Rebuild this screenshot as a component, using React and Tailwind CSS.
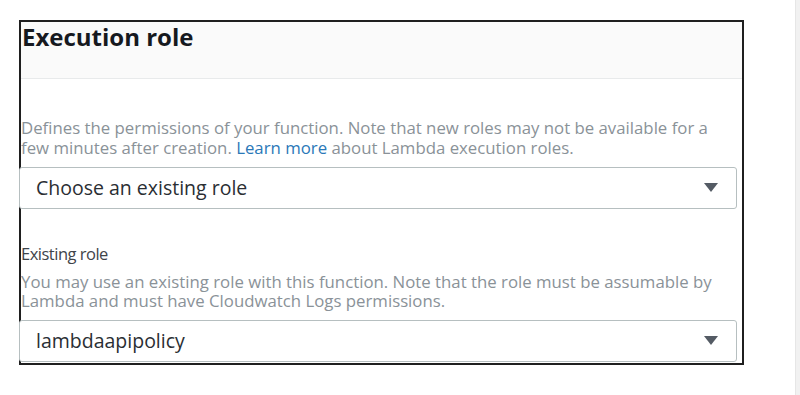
import React from "react";

const Caret = () => (
  <svg width="14" height="10" viewBox="0 0 14 10" className="shrink-0">
    <path d="M0 0 L14 0 L7 9 Z" fill="#545b64" />
  </svg>
);

const Select = ({ value }) => (
  <div className="flex items-center justify-between h-[42px] mr-[5px] -ml-[2px] pl-[16px] pr-[18px] bg-white border border-[#b6bfc0] rounded-[3px]">
    <span className="text-[19.5px] text-[#2a2e33]">{value}</span>
    <Caret />
  </div>
);

export default function App() {
  return (
    <div
      className="flex w-[800px] h-[395px] bg-white overflow-hidden"
      style={{ fontFamily: '"Open Sans", "Noto Sans", sans-serif' }}
    >
      <div className="flex-1 pl-[19px] pt-[20px]">
        <div className="w-[725px] h-[345px] border-2 border-[#1f1f1f]">
          {/* HEADER */}
          <div className="h-[57px] bg-[#fafafa] border-b border-[#e8eaeb] pl-[1px] pt-[1px]">
            <h2 className="text-[24px] leading-[28px] font-bold text-[#16191f]">
              Execution role
            </h2>
          </div>

          {/* BODY */}
          <div className="pt-[39px]">
            <p className="text-[16.8px] leading-[20px] text-[#8a9298] pr-[6px]">
              Defines the permissions of your function. Note that new roles may
              not be available for a few minutes after creation.{" "}
              <span className="text-[#2a78b8]">Learn more</span> about Lambda
              execution roles.
            </p>
            <div className="mt-[9px]">
              <Select value="Choose an existing role" />
            </div>

            <div className="mt-[34px] text-[16.5px] leading-[22px] tracking-[-0.5px] text-[#3f444a]">
              Existing role
            </div>
            <p className="mt-[7px] text-[16.8px] leading-[19px] text-[#8a9298] pr-[6px]">
              You may use an existing role with this function. Note that the
              role must be assumable by Lambda and must have Cloudwatch Logs
              permissions.
            </p>
            <div className="mt-[10px]">
              <Select value="lambdaapipolicy" />
            </div>
          </div>
        </div>
      </div>
      <div className="w-[5px] h-full bg-[#f1f1f1] border-l border-[#e6e6e6]" />
    </div>
  );
}
